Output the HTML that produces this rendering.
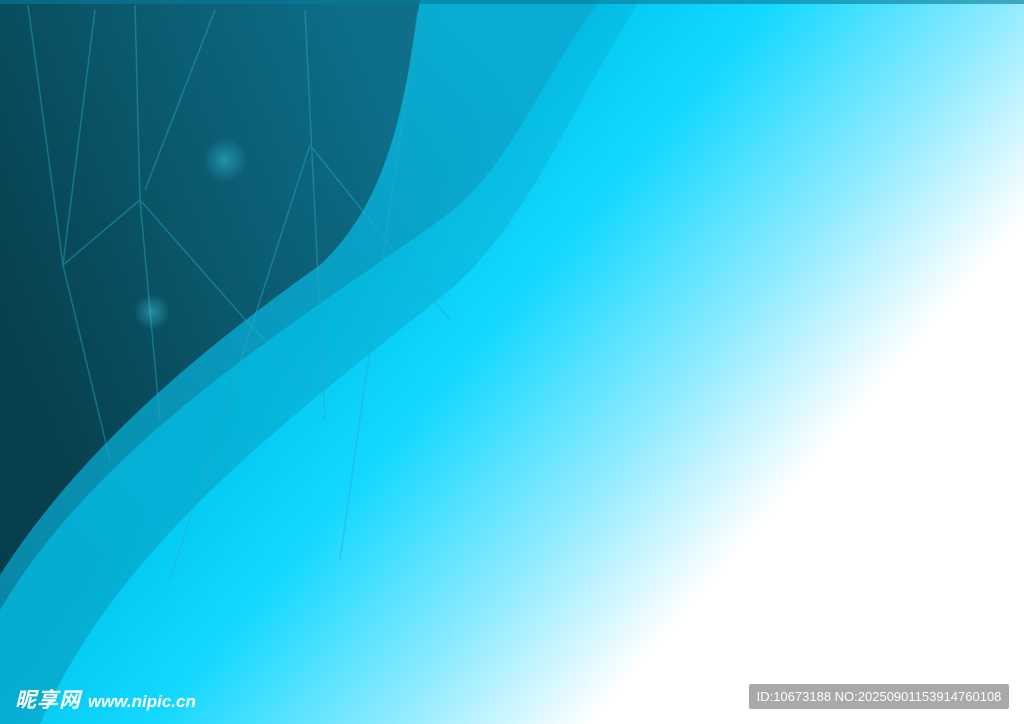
<!DOCTYPE html>
<html><head><meta charset="utf-8"><style>
html,body{margin:0;padding:0;width:1024px;height:724px;overflow:hidden;background:#fff}
svg{position:absolute;left:0;top:0}
.logo{position:absolute;left:15px;top:684px;font:bold italic 21px "Liberation Sans","Noto Sans CJK SC",sans-serif;color:#fff;letter-spacing:1px}
.logo span{font-size:17px;letter-spacing:0}
.id{position:absolute;left:749px;top:684px;width:260px;height:25px;background:#a9a9a9;color:#fff;font:13px "Liberation Sans",sans-serif;line-height:25px;text-align:center;border-radius:2px}
</style></head><body>
<svg width="1024" height="724" viewBox="0 0 1024 724">
<defs>
<linearGradient id="g1" gradientUnits="userSpaceOnUse" x1="440" y1="170" x2="800" y2="480">
<stop offset="0" stop-color="#00c8f0"/>
<stop offset="0.3" stop-color="#14d8ff"/>
<stop offset="0.7" stop-color="#95ecff"/>
<stop offset="1" stop-color="#ffffff"/>
</linearGradient>
<linearGradient id="g2" gradientUnits="userSpaceOnUse" x1="0" y1="320" x2="420" y2="150">
<stop offset="0" stop-color="#073844"/>
<stop offset="0.5" stop-color="#0a5366"/>
<stop offset="1" stop-color="#0e6a84"/>
</linearGradient>
<linearGradient id="g3" gradientUnits="userSpaceOnUse" x1="0" y1="600" x2="560" y2="100">
<stop offset="0" stop-color="#0a7896"/>
<stop offset="1" stop-color="#0ba6cc"/>
</linearGradient>
<radialGradient id="gl"><stop offset="0" stop-color="#3cc8e0" stop-opacity=".5"/><stop offset="1" stop-color="#3cc8e0" stop-opacity="0"/></radialGradient>
</defs>
<rect width="1024" height="724" fill="url(#g1)"/>
<path d="M0,0 L640,0 C570,110 530,220 450,290 C300,410 120,540 40,724 L0,724 Z" fill="url(#g3)" opacity="0.35"/>
<path d="M0,0 L600,0 C540,80 510,170 440,220 C300,320 100,440 0,610 Z" fill="url(#g3)" opacity="0.7"/>
<path d="M0,0 L420,0 C405,100 390,200 320,265 C200,350 80,450 0,575 Z" fill="url(#g2)" opacity="0.92"/>
<g stroke="#2aa9c4" stroke-width="1.5" opacity="0.45" fill="none">
<line x1="28" y1="5" x2="63" y2="265"/><line x1="63" y1="265" x2="110" y2="460"/>
<line x1="63" y1="265" x2="140" y2="200"/><line x1="140" y1="200" x2="250" y2="325"/>
<line x1="140" y1="200" x2="160" y2="420"/><line x1="135" y1="5" x2="140" y2="200"/>
<line x1="250" y1="325" x2="310" y2="385"/><line x1="305" y1="10" x2="325" y2="420"/>
<line x1="310" y1="145" x2="450" y2="320"/><line x1="310" y1="145" x2="170" y2="580"/>
<line x1="418" y1="10" x2="340" y2="560"/><line x1="95" y1="10" x2="63" y2="265"/>
<line x1="215" y1="10" x2="145" y2="190"/>
</g>
<circle cx="225" cy="160" r="22" fill="url(#gl)"/>
<circle cx="152" cy="312" r="18" fill="url(#gl)"/>
<rect x="0" y="0" width="1024" height="4" fill="#0a7a98" opacity="0.6"/>
</svg>
<div class="logo">昵享网 <span>www.nipic.cn</span></div>
<div class="id">ID:10673188 NO:20250901153914760108</div>
</body></html>
